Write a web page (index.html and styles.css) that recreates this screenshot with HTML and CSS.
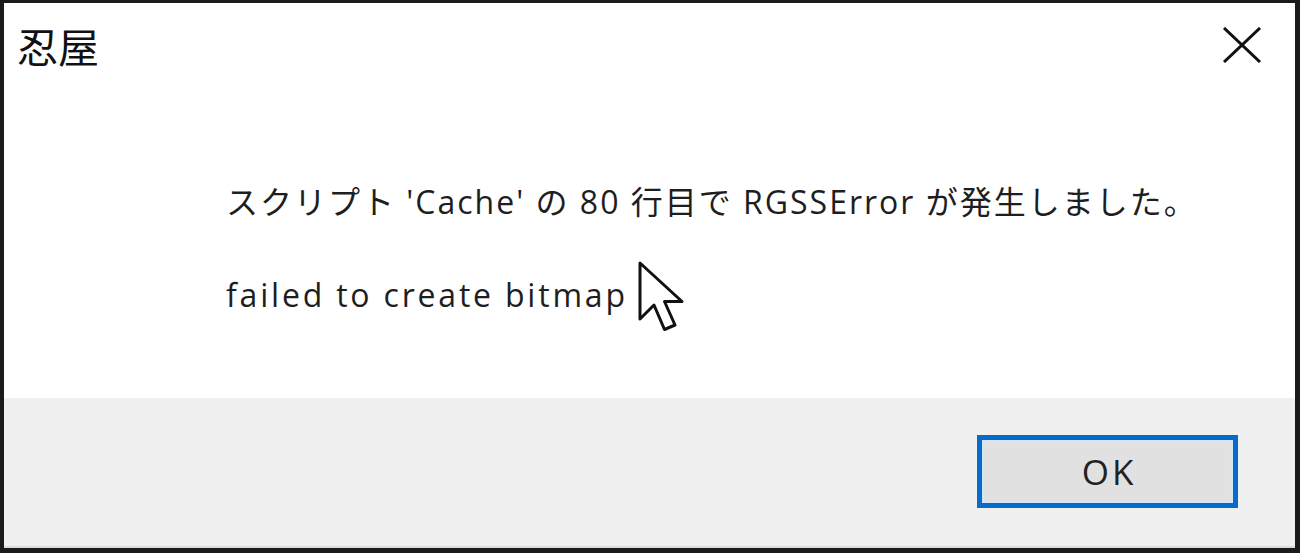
FILE: index.html
```html
<!DOCTYPE html>
<html lang="ja">
<head>
    <meta charset="UTF-8">
    <title>忍屋</title>
    <link rel="stylesheet" href="styles.css">
</head>
<body>
    <div class="window">
        <div class="titlebar">
            <div class="title">忍屋</div>
            <div class="close">
                <svg width="40" height="36" viewBox="0 0 40 36">
                    <path d="M2 1 L38 35 M38 1 L2 35" stroke="#111" stroke-width="3" fill="none"/>
                </svg>
            </div>
        </div>
        <div class="content">
            <p class="message">スクリプト 'Cache' の 80 行目で RGSSError が発生しました。</p>
            <p class="detail">failed to create bitmap</p>
            <svg class="cursor" width="48" height="72" viewBox="-2 -2 48 72">
                <path d="M0 0 L0 56 L14 42 L24.5 66.5 L35 62 L24.5 38.5 L42 38.5 Z" fill="#fff" stroke="#111" stroke-width="3" stroke-linejoin="round"/>
            </svg>
        </div>
        <div class="footer">
            <button class="ok-btn">OK</button>
        </div>
    </div>
</body>
</html>
```

FILE: styles.css
```css
html, body {
    margin: 0;
    padding: 0;
    background-color: #1b1b1b;
}
body {
    font-family: "Open Sans", "Noto Sans CJK JP", sans-serif;
    color: #1e1e1e;
}
.window {
    width: 1300px;
    height: 553px;
    box-sizing: border-box;
    border-style: solid;
    border-color: #1b1b1b;
    border-width: 3px 5px 5px 4px;
    display: flex;
    flex-direction: column;
    background-color: #fff;
}
.titlebar {
    height: 88px;
    display: flex;
    justify-content: space-between;
    align-items: center;
    padding: 0 33px 0 13px;
    flex-shrink: 0;
}
.title {
    font-family: "Noto Sans CJK JP", sans-serif;
    font-size: 41px;
    line-height: 1;
    color: #111;
    margin-top: -4px;
}
.close {
    display: flex;
    margin-top: -4px;
}
.content {
    flex: 1;
    position: relative;
    padding: 91px 0 0 222px;
}
.message {
    margin: 0;
    font-size: 32px;
    line-height: 40px;
    letter-spacing: 2px;
}
.detail {
    margin: 53px 0 0;
    font-size: 32px;
    line-height: 40px;
    letter-spacing: 2.8px;
}
.cursor {
    position: absolute;
    left: 634px;
    top: 170px;
}
.footer {
    height: 150px;
    flex-shrink: 0;
    background-color: #f0f0f0;
    display: flex;
    justify-content: flex-end;
    align-items: flex-start;
    padding: 37px 57px 0 0;
    box-sizing: border-box;
    border-bottom: 2px solid #dcdcdc;
}
.ok-btn {
    width: 261px;
    height: 73px;
    box-sizing: border-box;
    border: 5px solid #0a6ac8;
    box-shadow: inset 0 0 0 2px #cce8ff;
    background-color: #e1e1e1;
    font-family: "Open Sans", sans-serif;
    font-size: 35px;
    letter-spacing: 3px;
    color: #222;
    padding: 0 0 0 3px;
}
```
